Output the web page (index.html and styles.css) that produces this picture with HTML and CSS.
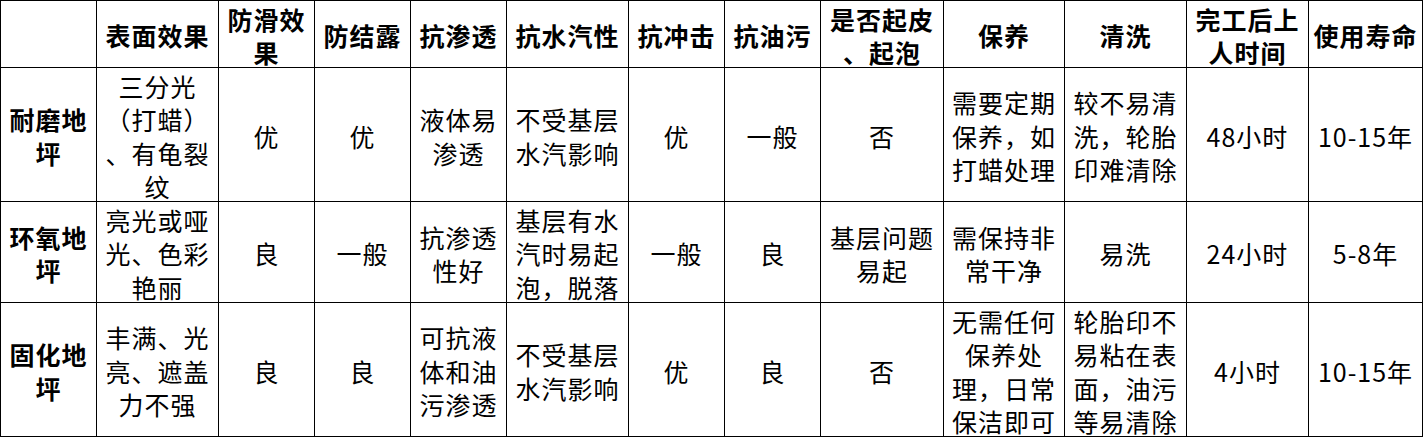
FILE: index.html
```html
<!DOCTYPE html>
<html lang="zh-CN">
<head>
<meta charset="utf-8">
<title>地坪对比</title>
<link rel="stylesheet" href="styles.css">
</head>
<body>
<div class="sheet">
  <div class="cell head"></div>
  <div class="cell head">表面效果</div>
  <div class="cell head">防滑效<br>果</div>
  <div class="cell head">防结露</div>
  <div class="cell head">抗渗透</div>
  <div class="cell head">抗水汽性</div>
  <div class="cell head">抗冲击</div>
  <div class="cell head">抗油污</div>
  <div class="cell head">是否起皮<br>、起泡</div>
  <div class="cell head">保养</div>
  <div class="cell head">清洗</div>
  <div class="cell head">完工后上<br>人时间</div>
  <div class="cell head">使用寿命</div>

  <div class="cell head">耐磨地<br>坪</div>
  <div class="cell">三分光<br>（打蜡）<br>、有龟裂<br>纹</div>
  <div class="cell">优</div>
  <div class="cell">优</div>
  <div class="cell">液体易<br>渗透</div>
  <div class="cell">不受基层<br>水汽影响</div>
  <div class="cell">优</div>
  <div class="cell">一般</div>
  <div class="cell">否</div>
  <div class="cell">需要定期<br>保养，如<br>打蜡处理</div>
  <div class="cell">较不易清<br>洗，轮胎<br>印难清除</div>
  <div class="cell">48小时</div>
  <div class="cell">10-15年</div>

  <div class="cell head">环氧地<br>坪</div>
  <div class="cell">亮光或哑<br>光、色彩<br>艳丽</div>
  <div class="cell">良</div>
  <div class="cell">一般</div>
  <div class="cell">抗渗透<br>性好</div>
  <div class="cell">基层有水<br>汽时易起<br>泡，脱落</div>
  <div class="cell">一般</div>
  <div class="cell">良</div>
  <div class="cell">基层问题<br>易起</div>
  <div class="cell">需保持非<br>常干净</div>
  <div class="cell">易洗</div>
  <div class="cell">24小时</div>
  <div class="cell">5-8年</div>

  <div class="cell head">固化地<br>坪</div>
  <div class="cell">丰满、光<br>亮、遮盖<br>力不强</div>
  <div class="cell">良</div>
  <div class="cell">良</div>
  <div class="cell">可抗液<br>体和油<br>污渗透</div>
  <div class="cell">不受基层<br>水汽影响</div>
  <div class="cell">优</div>
  <div class="cell">良</div>
  <div class="cell">否</div>
  <div class="cell">无需任何<br>保养处<br>理，日常<br>保洁即可</div>
  <div class="cell">轮胎印不<br>易粘在表<br>面，油污<br>等易清除</div>
  <div class="cell">4小时</div>
  <div class="cell">10-15年</div>
</div>
</body>
</html>
```
FILE: styles.css
```css
html, body {
  margin: 0;
  padding: 0;
  background: #ffffff;
}

.sheet {
  display: grid;
  grid-template-columns: 96px 122px 96px 96px 96px 122px 96px 96px 123px 121px 122px 122px 114px;
  grid-template-rows: 67px 134px 101px 134px;
  width: 1423px;
  box-sizing: border-box;
  border-top: 1px solid #000;
  border-left: 1px solid #000;
  font-family: "Noto Sans CJK SC", "Noto Sans", sans-serif;
  font-size: 25px;
  line-height: 33.5px;
  letter-spacing: 1px;
  color: #000;
}

.cell {
  box-sizing: border-box;
  border-right: 1px solid #000;
  border-bottom: 1px solid #000;
  display: flex;
  align-items: center;
  justify-content: center;
  text-align: center;
  overflow: hidden;
  padding-top: 4px;
  white-space: nowrap;
}

.head {
  font-weight: bold;
}
```
